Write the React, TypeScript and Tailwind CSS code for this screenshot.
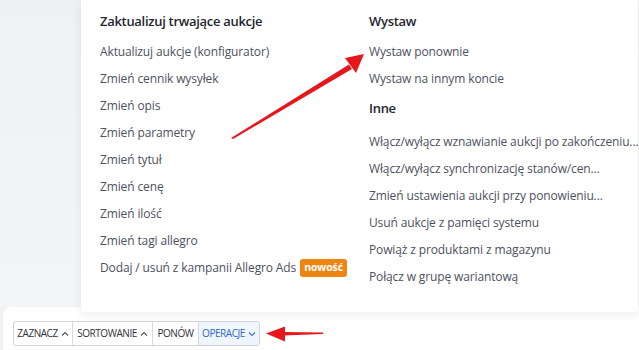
import React from "react";

const font = { fontFamily: '"Open Sans", "Noto Sans", sans-serif' };

function Item({ children }: { children: React.ReactNode }) {
  return (
    <div className="h-[27px] flex items-center whitespace-nowrap text-[12px] tracking-[-0.13px] text-[#4d5160]">
      {children}
    </div>
  );
}

function Heading({ children, className = "" }: { children: React.ReactNode; className?: string }) {
  return (
    <div className={"h-[27px] flex items-center whitespace-nowrap text-[13px] font-semibold tracking-[-0.3px] text-[#23262e] " + className}>
      {children}
    </div>
  );
}

function Up() {
  return (
    <svg width="8" height="6" viewBox="0 0 8 6" className="ml-[3px]">
      <path d="M1 4.5 L4 1.5 L7 4.5" fill="none" stroke="#555" strokeWidth="1.1" />
    </svg>
  );
}

function Down() {
  return (
    <svg width="8" height="6" viewBox="0 0 8 6" className="ml-[3px]">
      <path d="M1 1.5 L4 4.5 L7 1.5" fill="none" stroke="#3a73cf" strokeWidth="1.1" />
    </svg>
  );
}

export default function App() {
  return (
    <div className="relative w-[639px] h-[350px] overflow-hidden bg-[#f1f2f4] flex flex-col" style={font}>
      <div className="flex-1 bg-gradient-to-b from-[#eef0f3] to-[#f4f5f7]" />
      <div className="ml-[3px] h-[43px] bg-white rounded-tl-[8px] pl-[10px] pt-[14px] flex items-start">
        <div className="flex h-[25px] border border-[#cfd3d8] rounded-[3px] text-[10px] tracking-[-0.45px] text-[#2f3338] overflow-hidden">
          <div className="w-[59px] flex items-center justify-center border-r border-[#d6d9dd]">
            ZAZNACZ<Up />
          </div>
          <div className="w-[80px] flex items-center justify-center border-r border-[#d6d9dd]">
            SORTOWANIE<Up />
          </div>
          <div className="w-[46px] flex items-center justify-center border-r border-[#c9d8ec]">PONÓW</div>
          <div className="w-[60px] flex items-center justify-center bg-[#eef5fd] text-[#2f68c6]">
            OPERACJE<Down />
          </div>
        </div>
      </div>

      {/* dropdown panel */}
      <div className="absolute left-[81px] top-0 w-[557px] h-[312px] overflow-hidden bg-white rounded-b-[4px] shadow-[0_3px_10px_rgba(0,0,0,0.07)] pl-[19px] pt-[8px] flex">
        <div className="w-[269px] shrink-0 flex flex-col">
          <Heading className="mb-[3px]">Zaktualizuj trwające aukcje</Heading>
          <Item>Aktualizuj aukcje (konfigurator)</Item>
          <Item>Zmień cennik wysyłek</Item>
          <Item>Zmień opis</Item>
          <Item>Zmień parametry</Item>
          <Item>Zmień tytuł</Item>
          <Item>Zmień cenę</Item>
          <Item>Zmień ilość</Item>
          <Item>Zmień tagi allegro</Item>
          <Item>
            Dodaj / usuń z kampanii Allegro Ads
            <span className="ml-[4px] h-[18px] px-[4px] flex items-center rounded-[3px] bg-[#ee8511] text-white font-bold text-[10.5px] tracking-[-0.1px]">
              nowość
            </span>
          </Item>
        </div>
        <div className="flex flex-col">
          <Heading className="mb-[3px]">Wystaw</Heading>
          <Item>Wystaw ponownie</Item>
          <Item>Wystaw na innym koncie</Item>
          <Heading className="mt-[3px] mb-[6px]">Inne</Heading>
          <Item>Włącz/wyłącz wznawianie aukcji po zakończeniu...</Item>
          <Item>Włącz/wyłącz synchronizację stanów/cen...</Item>
          <Item>Zmień ustawienia aukcji przy ponowieniu...</Item>
          <Item>Usuń aukcje z pamięci systemu</Item>
          <Item>Powiąż z produktami z magazynu</Item>
          <Item>Połącz w grupę wariantową</Item>
        </div>
      </div>

      {/* annotation arrows */}
      <svg className="absolute left-0 top-0 pointer-events-none" width="639" height="350" viewBox="0 0 639 350">
        <polygon points="231,138 349,64.5 352,69 233,139" fill="#e5161c" />
        <polygon points="364,54 345,58 356,73" fill="#e5161c" />
        <polygon points="323,332.5 283,332 283,335.5 323,334" fill="#e5161c" />
        <polygon points="266,333.5 285,326.5 285,341.5" fill="#e5161c" />
      </svg>
    </div>
  );
}
